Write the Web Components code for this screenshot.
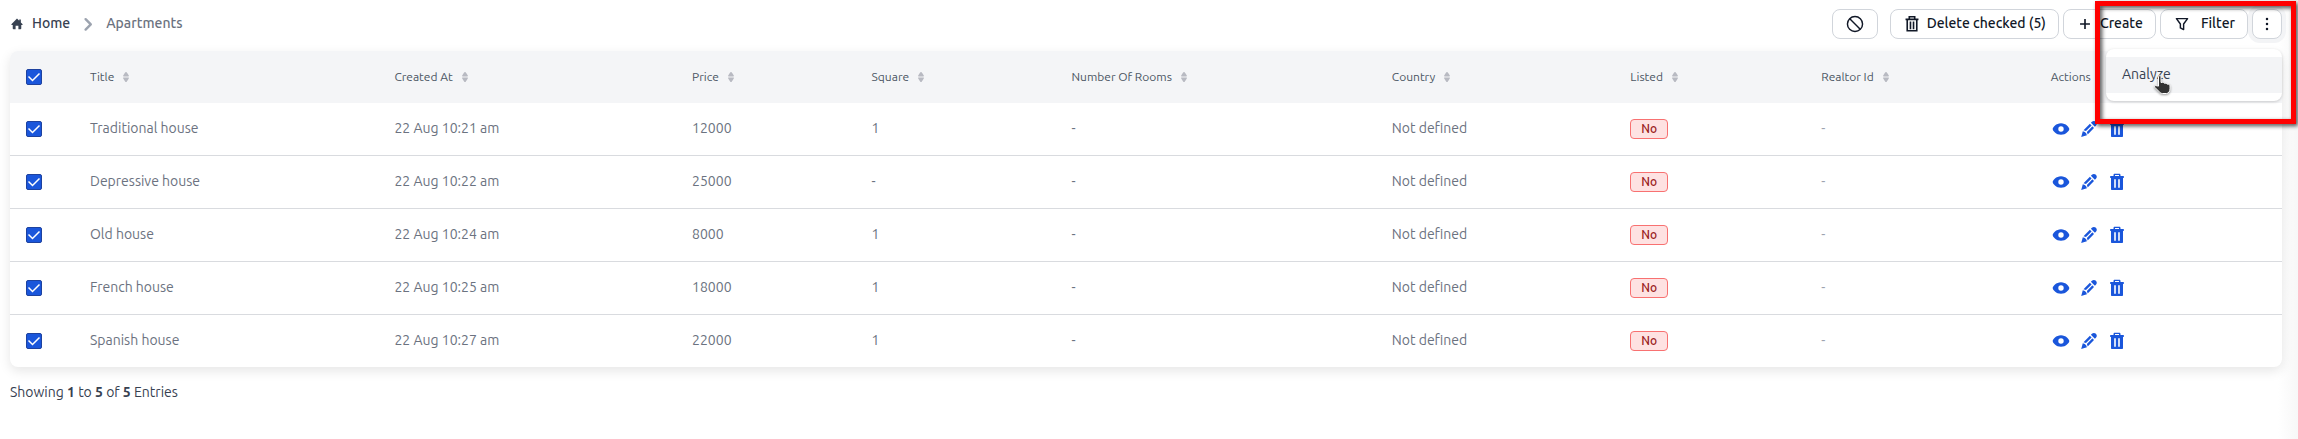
<!DOCTYPE html>
<html lang="en">
<head>
<meta charset="utf-8">
<title>Apartments</title>
<style>
  body {
    margin: 0;
    min-height: 100vh;
    font-family: Ubuntu, Lato, "Noto Sans", sans-serif;
    font-size: 14px;
    line-height: 20px;
    color: #374151;
    background: linear-gradient(to left, #f7f7f7, #fff 20px);
  }
</style>
</head>
<body>
<apartments-page></apartments-page>

<script>
const ICONS = {
  home: '<path fill="currentColor" d="M10 2.200 2.300 10c-.6.6-.3 1.400.5 1.400h1.100v5c0 .7.5 1.200 1.200 1.200H8v-5h4v5h2.900c.7 0 1.200-.5 1.200-1.200v-5h1.100c.8 0 1.100-.8.5-1.400l-2.200-2.200V3.500h-2.300v2z"/>',
  chevron: '<path fill="none" stroke="currentColor" stroke-width="3" stroke-linecap="round" stroke-linejoin="round" d="m7 4 6.500 6.500L7 17"/>',
  ban: '<g fill="none" stroke="currentColor" stroke-width="1.600"><circle cx="10" cy="10" r="8.400"/><path d="m4.200 4.200 11.600 11.600"/></g>',
  bin: '<g fill="none" stroke="currentColor" stroke-width="1.800"><path d="M2.800 4.800h14.400M7 4.500V2h6v2.500M4.700 5.200v12.300h10.600V5.200"/><path stroke-width="1.800" d="M8.300 7.300v8.400M11.700 7.300v8.400"/></g>',
  plus: '<path stroke="currentColor" stroke-width="1.800" d="M10 4.500v11M4.500 10h11"/>',
  funnel: '<path fill="none" stroke="currentColor" stroke-width="1.600" stroke-linejoin="round" d="M3.800 4h12.400l-4.400 6v6.200l-3.600-1.800V10z"/>',
  dots: '<g fill="currentColor"><circle cx="10" cy="4.500" r="1.400"/><circle cx="10" cy="10" r="1.400"/><circle cx="10" cy="15.500" r="1.400"/></g>',
  sort: '<path fill="currentColor" d="M9.100 5.600c.5-.8 1.300-.8 1.800 0l1.900 2.900c.2.4.1.9-.4.900H7.600c-.5 0-.6-.5-.4-.9zM9.100 14.400c.5.8 1.300.8 1.800 0l1.900-2.900c.2-.4.1-.9-.4-.900H7.600c-.5 0-.6.5-.4.900z"/>',
  eye: '<path fill="currentColor" fill-rule="evenodd" d="M10 4.200c-4.900 0-8.300 4-8.300 5.800s3.400 5.800 8.300 5.800 8.300-4 8.300-5.800-3.400-5.800-8.300-5.800zM10 7.300a2.700 2.700 0 1 1 0 5.400 2.700 2.700 0 0 1 0-5.400z"/>',
  pencil: '<path fill="currentColor" d="m11.900 3.800 1-1c1.300-1.300 2.900-1.100 4 0s1.300 2.700 0 4l-1 1zM10.900 4.800l1.700 1.700-5.600 5.600-2.500-.8zM13.600 7.500l1.400 1.400-6.300 6.500-.8-2.500 5.300-5.300zM3.800 12.300l2 .7 1.400 1.200.7 2.100-5.700 1.800z"/>',
  trash: '<path fill="currentColor" fill-rule="evenodd" d="M6.500 4V3c0-.8.5-1.300 1.300-1.300h4.400c.8 0 1.300.5 1.300 1.300v1h3.300v1.900H16V17c0 .6-.4 1-1 1H5c-.6 0-1-.4-1-1V5.900h-.8V4zM8 4h4v-.9H8zM7.200 7.300v8.400h1.600V7.300zM11.200 7.300v8.400h1.600V7.300z"/>'
};

class UiIcon extends HTMLElement {
  connectedCallback() {
    const root = this.attachShadow({mode: 'open'});
    root.innerHTML = `
      <style>
        :host {
          display: inline-flex;
          flex: none;
          width: var(--icon-size, 20px);
          height: var(--icon-size, 20px);
        }
        svg { width: 100%; height: 100%; overflow: visible; }
      </style>
      <svg viewBox="0 0 20 20" aria-hidden="true">${ICONS[this.getAttribute('name')]}</svg>
    `;
  }
}

class UiButton extends HTMLElement {
  connectedCallback() {
    const root = this.attachShadow({mode: 'open'});
    const label = this.getAttribute('label') || '';
    root.innerHTML = `
      <style>
        :host { display: block; }
        button {
          display: flex;
          align-items: center;
          justify-content: center;
          gap: var(--button-gap, 6px);
          box-sizing: border-box;
          min-width: 30px;
          height: 30px;
          padding: 0 12px;
          border: 1px solid #d1d5db;
          border-radius: 8px;
          background: #fff;
          color: #111827;
          font: inherit;
          font-weight: 500;
          cursor: pointer;
        }
        ui-icon { --icon-size: 18px; }
        :host([icon-only]) button { padding: 0 13px; }
        :host([compact]) button { padding: 0 5px; }
        :host([active]) button { box-shadow: 0 0 0 4px #f3f4f6; }
        slot { display: block; padding-bottom: 2px; }
        :host([icon-only]) slot { display: none; }
      </style>
      <button type="button" ${label ? `aria-label="${label}"` : ''}>
        <ui-icon name="${this.getAttribute('icon')}"></ui-icon>
        <slot></slot>
      </button>
    `;
  }
}

class UiBreadcrumb extends HTMLElement {
  connectedCallback() {
    const root = this.attachShadow({mode: 'open'});
    root.innerHTML = `
      <style>
        :host { display: block; font-weight: 500; }
        nav, a { display: flex; align-items: center; }
        a { gap: 8px; color: #374151; text-decoration: none; }
        nav { gap: 10px; color: #6b7280; }
        .text { padding-bottom: 2px; }
        a ui-icon { --icon-size: 14px; }
        nav > ui-icon { --icon-size: 16px; color: #9ca3af; }
      </style>
      <nav aria-label="Breadcrumb">
        <a href="#home"><ui-icon name="home"></ui-icon><span class="text">Home</span></a>
        <ui-icon name="chevron"></ui-icon>
        <span class="text"><slot></slot></span>
      </nav>
    `;
  }
}

class UiMenu extends HTMLElement {
  connectedCallback() {
    const root = this.attachShadow({mode: 'open'});
    root.innerHTML = `
      <style>
        :host { display: block; position: relative; z-index: 2; }
        .menu {
          position: absolute;
          top: 40px;
          right: 0;
          width: 176px;
          padding: 8px 0;
          border-radius: 8px;
          background: #fff;
          box-shadow: 0 1px 3px rgba(0, 0, 0, .18);
        }
        a {
          display: block;
          padding: 7px 16px 9px;
          background: #f3f4f6;
          color: #374151;
          text-decoration: none;
        }
        .pointer {
          position: absolute;
          top: 26px;
          left: 48px;
          width: 18px;
          height: 20px;
          filter: drop-shadow(0 1px 1px rgba(0, 0, 0, .4));
        }
      </style>
      <ui-button icon="dots" label="More" icon-only compact active></ui-button>
      <div class="menu">
        <a href="#analyze"><slot></slot></a>
        <svg class="pointer" viewBox="0 0 18 20" aria-hidden="true">
          <path fill="#333" stroke="#fff" stroke-width="1" stroke-linejoin="round" d="M4.500 1.500c0-1 2.500-1 2.500 0v6c2-.6 3 .2 3.400.8 1.300-.4 2.200.1 2.600.8 1.600-.3 3 .5 3 1.700v3c0 2.500-1.300 4.700-3.500 4.700H8.500c-1.500 0-2.500-.8-3.500-2L.9 12.400c-.8-.9-.2-1.800.9-1.800l2.700.5z"/>
        </svg>
      </div>
    `;
  }
}

class UiCheck extends HTMLElement {
  connectedCallback() {
    const root = this.attachShadow({mode: 'open'});
    root.innerHTML = `
      <style>
        :host { display: block; position: relative; width: 16px; height: 16px; color: #fff; }
        input {
          appearance: none;
          display: block;
          box-sizing: border-box;
          width: 16px;
          height: 16px;
          margin: 0;
          border: 1px solid #1e429f;
          border-radius: 2px;
          background: #1a56db;
        }
        svg { position: absolute; inset: 0; pointer-events: none; }
        input:not(:checked) { background: #fff; }
      </style>
      <input type="checkbox" checked aria-label="${this.getAttribute('label')}">
      <svg viewBox="0 0 16 16" aria-hidden="true"><path fill="none" stroke="currentColor" stroke-width="1.500" d="m2.500 7.500 4 4 7-7"/></svg>
    `;
  }
}

class UiBadge extends HTMLElement {
  connectedCallback() {
    const root = this.attachShadow({mode: 'open'});
    root.innerHTML = `
      <style>
        :host {
          display: block;
          box-sizing: border-box;
          width: fit-content;
          height: 20px;
          padding: 0 10px;
          border: 1px solid #f87171;
          border-radius: 4px;
          background: #fee2e2;
          color: #991b1b;
          font-size: 12px;
          font-weight: 500;
          line-height: 18px;
        }
      </style>
      <slot></slot>
    `;
  }
}

class ApartmentTable extends HTMLElement {
  connectedCallback() {
    const root = this.attachShadow({mode: 'open'});
    // column title and its share of the table width
    const columns = [
      ['Title', 13.4],
      ['Created At', 13.1],
      ['Price', 7.9],
      ['Square', 8.8],
      ['Number Of Rooms', 14.1],
      ['Country', 10.5],
      ['Listed', 8.4],
      ['Realtor Id', 10.1]
    ];
    const rows = [
      ['Traditional house', '22 Aug 10:21 am', '12000', '1'],
      ['Depressive house', '22 Aug 10:22 am', '25000', '-'],
      ['Old house', '22 Aug 10:24 am', '8000', '1'],
      ['French house', '22 Aug 10:25 am', '18000', '1'],
      ['Spanish house', '22 Aug 10:27 am', '22000', '1']
    ];
    root.innerHTML = `
      <style>
        :host {
          display: block;
          overflow: hidden;
          border-radius: 8px;
          background: #fff;
          box-shadow: 0 4px 12px rgba(0, 0, 0, .1);
        }
        table {
          width: 100%;
          table-layout: fixed;
          border-spacing: 0;
          color: #6b7280;
        }
        th, td {
          box-sizing: border-box;
          height: 53px;
          padding: 0 24px;
          text-align: left;
          border-bottom: 1px solid #d9dbdf;
        }
        td.text { padding-bottom: 2px; }
        th {
          height: 52px;
          border: 0;
          background: #f4f5f7;
          color: #4b5563;
          font-size: 12px;
          font-weight: 400;
        }
        tr:last-child td { height: 52px; border: 0; }
        .check-col { width: 56px; }
        th:first-child, td:first-child { padding: 0 16px; }
        th button {
          display: flex;
          align-items: center;
          gap: 2px;
          padding: 0;
          border: 0;
          background: none;
          color: inherit;
          font: inherit;
          white-space: nowrap;
        }
        th ui-icon { color: #b8bac2; }
        .muted { color: #9ca3af; }
        .actions { display: flex; gap: 8px; }
        .actions a { display: flex; color: #1a56db; }
      </style>
      <table>
        <colgroup>
          <col class="check-col">
          ${columns.map(c => `<col style="width: ${c[1]}%">`).join('')}
          <col>
        </colgroup>
        <thead>
          <tr>
            <th><ui-check label="Check all"></ui-check></th>
            ${columns.map(c => `<th><button type="button">${c[0]}<ui-icon name="sort"></ui-icon></button></th>`).join('')}
            <th>Actions</th>
          </tr>
        </thead>
        <tbody>
          ${rows.map(r => `
            <tr>
              <td><ui-check label="${r[0]}"></ui-check></td>
              ${r.map(v => `<td class="text">${v}</td>`).join('')}
              <td class="text">-</td>
              <td class="text">Not defined</td>
              <td><ui-badge>No</ui-badge></td>
              <td class="text muted">-</td>
              <td>
                <div class="actions">
                  <a href="#view" aria-label="View"><ui-icon name="eye"></ui-icon></a>
                  <a href="#edit" aria-label="Edit"><ui-icon name="pencil"></ui-icon></a>
                  <a href="#delete" aria-label="Delete"><ui-icon name="trash"></ui-icon></a>
                </div>
              </td>
            </tr>
          `).join('')}
        </tbody>
      </table>
    `;
  }
}

class HighlightFrame extends HTMLElement {
  connectedCallback() {
    const root = this.attachShadow({mode: 'open'});
    root.innerHTML = `
      <style>
        :host {
          display: block;
          position: absolute;
          z-index: 3;
          top: 1px;
          right: 2px;
          box-sizing: border-box;
          width: 201px;
          height: 123px;
          border: 5px solid #f00;
          filter: drop-shadow(2px 2px 2px rgba(0, 0, 0, .7));
          pointer-events: none;
        }
      </style>
    `;
  }
}

class ApartmentsPage extends HTMLElement {
  connectedCallback() {
    const root = this.attachShadow({mode: 'open'});
    root.innerHTML = `
      <style>
        :host {
          display: block;
          position: relative;
          padding: 9px 16px 16px 10px;
        }
        header {
          display: flex;
          align-items: center;
          justify-content: space-between;
          margin-bottom: 12px;
        }
        .tools { display: flex; gap: 4px; }
        .cancel { margin-right: 8px; }
        .filter { --button-gap: 10px; }
        footer { padding-top: 15px; }
        b { font-weight: 700; }
      </style>
      <header>
        <ui-breadcrumb>Apartments</ui-breadcrumb>
        <div class="tools">
          <ui-button class="cancel" icon="ban" label="Uncheck all" icon-only></ui-button>
          <ui-button icon="bin">Delete checked (5)</ui-button>
          <ui-button icon="plus">Create</ui-button>
          <ui-button class="filter" icon="funnel">Filter</ui-button>
          <ui-menu>Analyze</ui-menu>
        </div>
      </header>
      <apartment-table></apartment-table>
      <footer>Showing <b>1</b> to <b>5</b> of <b>5</b> Entries</footer>
      <highlight-frame></highlight-frame>
    `;
  }
}

customElements.define('ui-icon', UiIcon);
customElements.define('ui-button', UiButton);
customElements.define('ui-breadcrumb', UiBreadcrumb);
customElements.define('ui-menu', UiMenu);
customElements.define('ui-check', UiCheck);
customElements.define('ui-badge', UiBadge);
customElements.define('apartment-table', ApartmentTable);
customElements.define('highlight-frame', HighlightFrame);
customElements.define('apartments-page', ApartmentsPage);
</script>
</body>
</html>
